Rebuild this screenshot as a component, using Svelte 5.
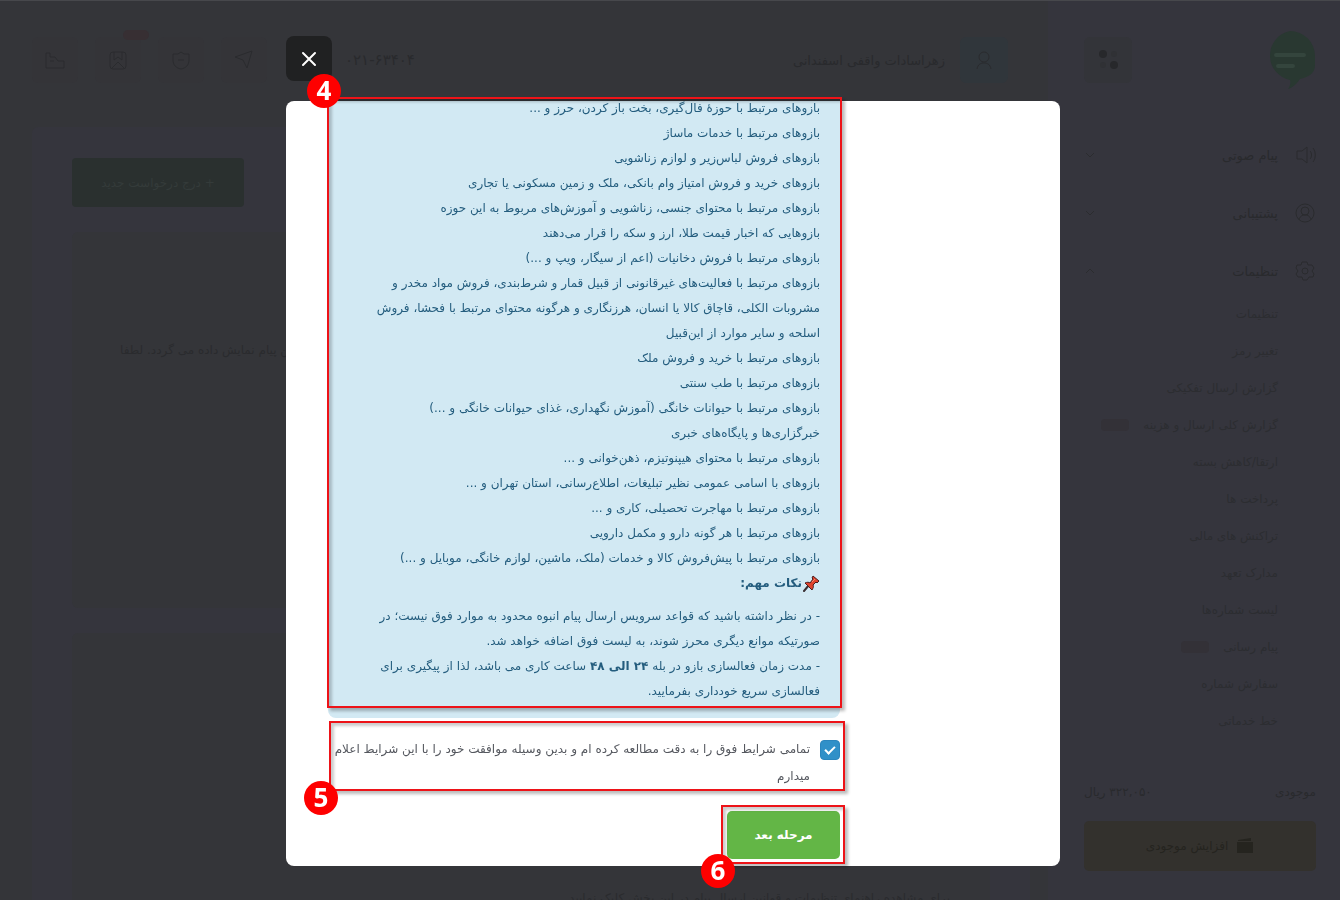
<script>
  let accepted = $state(true);

  const rules = [
    ['بازوهای مرتبط با حوزهٔ فال‌گیری، بخت باز کردن، حرز و ...'],
    ['بازوهای مرتبط با خدمات ماساژ'],
    ['بازوهای فروش لباس‌زیر و لوازم زناشویی'],
    ['بازوهای خرید و فروش امتیاز وام بانکی، ملک و زمین مسکونی یا تجاری'],
    ['بازوهای مرتبط با محتوای جنسی، زناشویی و آموزش‌های مربوط به این حوزه'],
    ['بازوهایی که اخبار قیمت طلا، ارز و سکه را قرار می‌دهند'],
    ['بازوهای مرتبط با فروش دخانیات (اعم از سیگار، ویپ و ...)'],
    [
      'بازوهای مرتبط با فعالیت‌های غیرقانونی از قبیل قمار و شرط‌بندی، فروش مواد مخدر و',
      'مشروبات الکلی، قاچاق کالا یا انسان، هرزنگاری و هرگونه محتوای مرتبط با فحشا، فروش',
      'اسلحه و سایر موارد از این‌قبیل'
    ],
    ['بازوهای مرتبط با خرید و فروش ملک'],
    ['بازوهای مرتبط با طب سنتی'],
    ['بازوهای مرتبط با حیوانات خانگی (آموزش نگهداری، غذای حیوانات خانگی و ...)'],
    ['خبرگزاری‌ها و پایگاه‌های خبری'],
    ['بازوهای مرتبط با محتوای هیپنوتیزم، ذهن‌خوانی و ...'],
    ['بازوهای با اسامی عمومی نظیر تبلیغات، اطلاع‌رسانی، استان تهران و ...'],
    ['بازوهای مرتبط با مهاجرت تحصیلی، کاری و ...'],
    ['بازوهای مرتبط با هر گونه دارو و مکمل دارویی'],
    ['بازوهای مرتبط با پیش‌فروش کالا و خدمات (ملک، ماشین، لوازم خانگی، موبایل و ...)']
  ];

  const links = [
    { t: 'تنظیمات' },
    { t: 'تغییر رمز' },
    { t: 'گزارش ارسال تفکیکی' },
    { t: 'گزارش کلی ارسال و هزینه', tag: true },
    { t: 'ارتقا/کاهش بسته' },
    { t: 'پرداخت ها' },
    { t: 'تراکنش های مالی' },
    { t: 'مدارک تعهد' },
    { t: 'لیست شماره‌ها' },
    { t: 'پیام رسانی', tag: true },
    { t: 'سفارش شماره' },
    { t: 'خط خدماتی' }
  ];
</script>

<div class="page" dir="rtl" lang="fa">
  <aside class="side">
    <div class="brand">
      <svg width="52" height="60" viewBox="0 0 52 60"><path fill="#293831" d="M26 1a25 25 0 0 1 25 25v9c0 9-7 12-15 14-3 4-6 8-12 10 2-3 3-6 2-9A25 25 0 0 1 26 1z"/><path stroke="#34453d" stroke-width="4" stroke-linecap="round" d="M12 25h28M14 36h15"/></svg>
      <span class="apps"><svg width="22" height="24" viewBox="0 0 22 24" fill="#27282b"><circle cx="6" cy="6" r="4"/><circle cx="17" cy="17" r="4"/><circle cx="17" cy="6" r="3" fill="#303135"/><circle cx="6" cy="17" r="3" fill="#303135"/></svg></span>
    </div>
    <nav>
      <a class="top" href="#voice">
        <svg class="ic" viewBox="0 0 22 22"><path d="M13 3v16l-5-4H3V7h5zM16 7c2 2 2 6 0 8M19 4c3 4 3 10 0 14"/></svg>
        <span>پیام صوتی</span>
        <svg class="chev" viewBox="0 0 12 12"><path d="m2 4 4 4 4-4"/></svg>
      </a>
      <a class="top" href="#support">
        <svg class="ic" viewBox="0 0 22 22"><circle cx="11" cy="11" r="9"/><circle cx="11" cy="9" r="4"/><path d="M5 18c1-4 3-5 6-5s5 1 6 5"/></svg>
        <span>پشتیبانی</span>
        <svg class="chev" viewBox="0 0 12 12"><path d="m2 4 4 4 4-4"/></svg>
      </a>
      <a class="top" href="#settings">
        <svg class="ic" viewBox="0 0 22 22"><path d="m8 2-1 3-4 0-1 3 2 3-2 3 2 3h4l1 3h4l2-3h4l1-3-2-3 2-3-2-3h-4l-1-3z"/><circle cx="11" cy="11" r="3"/></svg>
        <span>تنظیمات</span>
        <svg class="chev" viewBox="0 0 12 12"><path d="m2 8 4-4 4 4"/></svg>
      </a>
      <ul class="links">
        {#each links as l}
          <li><a href="#item">{l.t}</a>{#if l.tag}<i class="tag"></i>{/if}</li>
        {/each}
      </ul>
    </nav>
    <div class="balance"><span>موجودی</span><span>۳۲۲,۰۵۰ ریال</span></div>
    <button class="charge" type="button">
      <svg width="18" height="16" viewBox="0 0 18 16" fill="#25241f"><path d="M2 2 15 0v3H2zM1 4h16v11H1z"/></svg>
      افزایش موجودی
    </button>
  </aside>

  <main class="main">
    <header class="bar">
      <div class="user">
        <span class="avatar"><svg class="ic" viewBox="0 0 22 22"><circle cx="11" cy="8" r="5"/><path d="M4 20c1-5 4-6 7-6s6 1 7 6"/></svg></span>
        <span>زهراسادات واقفی اسفندانی</span>
      </div>
      <div class="tools">
        <span class="phone" dir="ltr">۰۲۱-۶۳۴۰۴</span>
        <span class="tool gap"><svg class="ic" viewBox="0 0 22 22"><path d="m2 8 17-6-5 17-4-8z"/></svg></span>
        <span class="tool"><svg class="ic" viewBox="0 0 22 22"><path d="M3 5h5l3-2 3 2h5v6c0 5-3 8-8 9-5-1-8-4-8-9z"/><path d="M8 11h6"/></svg></span>
        <span class="tool"><svg class="ic" viewBox="0 0 22 22"><rect x="3" y="3" width="16" height="17" rx="3"/><path d="M7 3v8l4-3 4 3V3M5 19l6-6 6 6"/></svg><i class="dot"></i></span>
        <span class="tool"><svg class="ic" viewBox="0 0 22 22"><path d="M2 4v15h18v-7h-6l-3-4H6V4zM6 12h4"/></svg></span>
      </div>
    </header>
    <section class="panel">
      <div class="actions"><button class="create" type="button">+ درج درخواست جدید</button></div>
      <div class="card one"><p>درخواست شما پس از بررسی این پیام نمایش داده می گردد. لطفا</p></div>
      <div class="card two"><p>برای مشاهده راهنمای تنظیمات و قوانین ارسال پیام در این بخش کلیک نمایید</p></div>
    </section>
  </main>
</div>

<div class="overlay">
  <div class="dialog" role="dialog" aria-modal="true" dir="rtl" lang="fa">
    <button class="close" type="button" aria-label="بستن">
      <svg width="16" height="16" viewBox="0 0 16 16"><path d="M2 2l12 12M14 2 2 14" stroke="#fff" stroke-width="2" stroke-linecap="round"/></svg>
    </button>
    <div class="sheet">
      <div class="marked notice-wrap">
        <div class="notice">
          <ul class="rules">
            {#each rules as rule}
              <li>{#each rule as line}<span>{line}</span>{/each}</li>
            {/each}
          </ul>
          <h2>
            <svg width="18" height="17" viewBox="0 0 18 17"><path d="M7 10 2 16" stroke="#3a3034" stroke-width="2" stroke-linecap="round"/><path d="M11 1 17 6l-2 2-1-1-3 3c1 2 0 3-1 5L3 8c2-1 4-1 5 0l3-4-1-1z" fill="#e0432c" stroke="#4b1c1c" stroke-linejoin="round"/><path d="m10 7 3-3" stroke="#f98a6c" stroke-width="1"/></svg>نکات مهم:
          </h2>
          <p class="notes">
            <span>- در نظر داشته باشید که قواعد سرویس ارسال پیام انبوه محدود به موارد فوق نیست؛ در</span>
            <span>صورتیکه موانع دیگری محرز شوند، به لیست فوق اضافه خواهد شد.</span>
            <span>- مدت زمان فعالسازی بازو در بله <b>۲۴ الی ۴۸</b> ساعت کاری می باشد، لذا از پیگیری برای</span>
            <span>فعالسازی سریع خودداری بفرمایید.</span>
          </p>
        </div>
        <div class="frame"><b class="num n4">4</b></div>
      </div>

      <div class="marked agree">
        <input id="accept" type="checkbox" bind:checked={accepted} />
        <label for="accept"><span>تمامی شرایط فوق را به دقت مطالعه کرده ام و بدین وسیله موافقت خود را با این شرایط اعلام</span><span>میدارم</span></label>
        <div class="frame"><b class="num n5">5</b></div>
      </div>

      <div class="marked next">
        <button type="button" disabled={!accepted}>مرحله بعد</button>
        <div class="frame"><b class="num n6">6</b></div>
      </div>
    </div>
  </div>
</div>

<style>
  :global(body) { background: #343539; overflow: hidden; }
  .page, .dialog { font-family: "DejaVu Sans", sans-serif; font-size: 12px; }
  * { box-sizing: border-box; }
  p, ul, h2 { margin: 0; padding: 0; list-style: none; }
  button { font: inherit; border: 0; cursor: pointer; }
  a { color: inherit; text-decoration: none; }

  .page { display: flex; height: 100vh; overflow: hidden; color: #292a2d; border-top: 1px solid #47484c; }
  .side { width: 292px; flex: none; background: #35353d; padding: 28px 24px 29px 36px; display: flex; flex-direction: column; }
  .brand { display: flex; justify-content: space-between; align-items: center; height: 62px; margin-bottom: 35px; }
  .apps { width: 48px; height: 46px; background: #333439; border-radius: 6px; display: grid; place-items: center; }
  .ic { width: 22px; height: 22px; fill: none; stroke: #2a2b2e; stroke-width: 1; stroke-linejoin: round; }
  .top { display: flex; align-items: center; height: 58px; gap: 16px; font-size: 13px; }
  .top span { flex: 1; }
  .chev { width: 12px; height: 12px; fill: none; stroke: #2b2c2f; stroke-width: 1; }
  .links { padding-right: 38px; margin-top: -5px; color: #2c2d31; }
  .links li { height: 37px; display: flex; align-items: center; gap: 14px; white-space: nowrap; }
  .tag { width: 28px; height: 12px; border-radius: 4px; background: #333137; }
  .balance { display: flex; justify-content: space-between; margin-top: auto; margin-bottom: 18px; line-height: 22px; }
  .charge { height: 50px; flex: none; border-radius: 5px; background: #33312d; color: #25241f; display: flex; align-items: center; justify-content: center; gap: 8px; }

  .main { flex: 1; min-width: 0; display: flex; flex-direction: column; padding: 35px 18px 0 32px; }
  .bar { display: flex; justify-content: space-between; height: 48px; flex: none; padding-right: 22px; margin-bottom: 43px; }
  .user, .tools { display: flex; align-items: center; }
  .user { gap: 15px; font-size: 13px; }
  .avatar { width: 48px; height: 46px; background: #30363b; border-radius: 6px; display: grid; place-items: center; }
  .tool { width: 46px; height: 46px; margin-right: 17px; border-radius: 6px; display: grid; place-items: center; position: relative; background: #343438; }
  .gap { margin-right: 78px; }
  .phone { font-size: 15px; }
  .dot { position: absolute; top: -7px; right: -8px; width: 26px; height: 10px; border-radius: 5px; background: #372f33; }
  .panel { flex: 1; background: #35353d; padding: 31px 40px 0; display: flex; flex-direction: column; gap: 25px; border-radius: 6px 6px 0 0; }
  .actions { display: flex; justify-content: flex-end; }
  .create { width: 172px; height: 49px; border-radius: 4px; background: #2a302f; color: #343b3a; }
  .card { background: #343539; border-radius: 6px; }
  .card p { white-space: nowrap; color: #2a2b2e; }
  .one { height: 376px; padding: 111px 0 0 48px; text-align: left; }
  .two { flex: 1; padding: 258px 40px 0; }

  .overlay { position: fixed; inset: 0; display: flex; justify-content: center; align-items: flex-start; padding: 36px 0 34px 6px; }
  .dialog { width: 100%; max-width: 774px; display: flex; flex-direction: column; align-items: flex-end; }
  .close { width: 46px; height: 45px; border-radius: 8px; background: #202122; padding: 0; display: grid; place-items: center; margin-bottom: 20px; }
  .sheet { width: 100%; background: #fff; border-radius: 8px; padding: 0 220px 7px 42px; }
  .marked { position: relative; }
  .notice { overflow: hidden; background: #d2e9f3; color: #245d7e; border-radius: 0 0 8px 8px; line-height: 25px; padding: 0 20px 14px; }
  .rules { margin-top: -5px; }
  .notice span, label span { display: block; white-space: nowrap; }
  h2 { font-size: 12px; line-height: 25px; display: flex; align-items: center; margin-bottom: 8px; }
  .agree { display: flex; gap: 10px; align-items: flex-start; margin-top: 18px; line-height: 27px; color: #55585f; }
  input { appearance: none; flex: none; width: 20px; height: 20px; margin: 4px 0 0; border-radius: 4px; border: 1px solid #2b85bd; display: grid; place-items: center; }
  input:checked { background: #3090c8; }
  input:checked::after { content: ""; width: 8px; height: 4px; border: solid #fff; border-width: 0 0 2px 2px; transform: translateY(-1px) rotate(-45deg); }
  .next { width: max-content; margin-top: 21px; }
  .next button { width: 113px; height: 48px; border-radius: 5px; background: #63b646; color: #fff; font-weight: bold; display: block; }

  .frame { position: absolute; border: 2px solid #ed1318; box-shadow: 3px 3px 3px #0004, inset 3px 3px 3px #0003; pointer-events: none; }
  .notice-wrap .frame { inset: -4px -2px 10px -1px; }
  .agree .frame { inset: -15px -5px -1px 1px; }
  .next .frame { inset: -6px -5px -5px -6px; }
  .num { position: absolute; width: 34px; height: 34px; border-radius: 50%; background: #fe0000; color: #fff; font: 700 26px/33px "Open Sans", sans-serif; text-align: center; }
  .n4 { left: -22px; top: -25px; }
  .n5 { left: -27px; bottom: -26px; }
  .n6 { left: -22px; bottom: -26px; }
</style>
